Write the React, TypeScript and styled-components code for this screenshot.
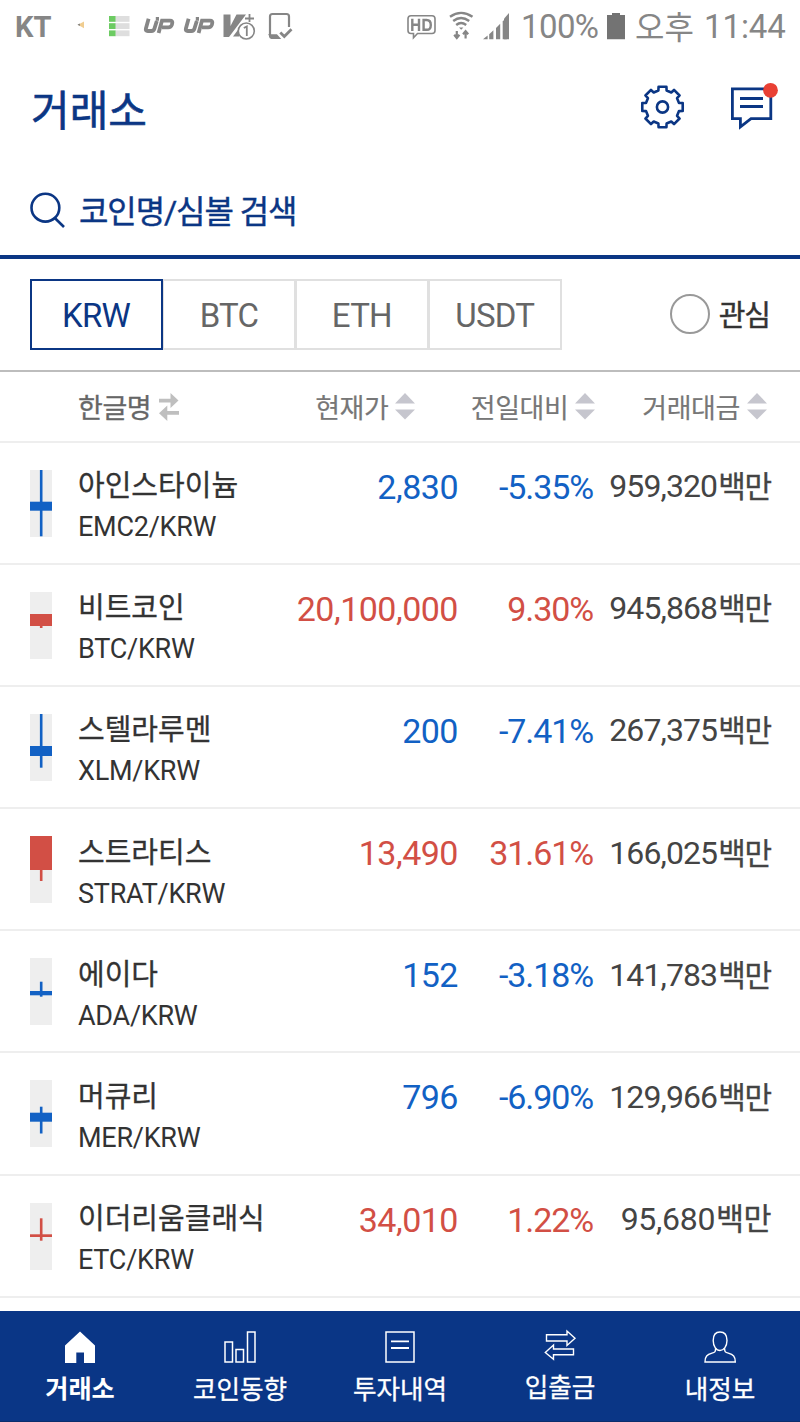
import React from 'react';
import styled, { createGlobalStyle, css } from 'styled-components';

const NAVY = '#0b3684';
const BLUE = '#1261c4';
const RED = '#d24f45';

const GlobalStyle = createGlobalStyle`
  * { box-sizing: border-box; }
  body {
    margin: 0;
    background: #fff;
    font-family: Roboto, 'Noto Sans CJK KR', sans-serif;
    color: #333;
  }
`;

const Screen = styled.div`
  width: 800px;
  height: 1422px;
  display: flex;
  flex-direction: column;
  overflow: hidden;
  background: #fff;
`;

/* ---------- status bar ---------- */

const StatusBar = styled.div`
  height: 54px;
  flex: none;
  display: flex;
  justify-content: space-between;
  color: #868686;
`;

const StatusGroup = styled.div<{ $side: 'left' | 'right' }>`
  display: flex;
  align-items: flex-start;
  height: 54px;
  ${(p) => (p.$side === 'left' ? 'padding-left: 15px;' : 'padding-right: 15px;')}
`;

const StatusText = styled.span<{ $width: number; $size: number; $weight?: number; $spacing?: number; $top: number }>`
  width: ${(p) => p.$width}px;
  margin-top: ${(p) => p.$top}px;
  font-size: ${(p) => p.$size}px;
  font-weight: ${(p) => p.$weight ?? 400};
  letter-spacing: ${(p) => p.$spacing ?? 0}px;
  line-height: 40px;
  white-space: nowrap;
`;

const StatusIcon = styled.svg`
  display: block;
  flex: none;
  overflow: visible;
`;

/* ---------- header and search ---------- */

const Header = styled.header`
  height: 106px;
  flex: none;
  display: flex;
  justify-content: space-between;
  padding: 27px 20px 0 31px;
`;

const Title = styled.h1`
  margin: 4px 0 0;
  font-size: 42px;
  font-weight: 400;
  line-height: 54px;
  letter-spacing: 0;
  -webkit-text-stroke: 0.6px;
  color: ${NAVY};
`;

const HeaderActions = styled.div`
  display: flex;
  gap: 44px;
`;

const Icon = styled.svg`
  display: block;
  flex: none;
  overflow: visible;
`;

const SearchBar = styled.div`
  height: 99px;
  flex: none;
  display: flex;
  padding: 30px 0 0 29px;
  border-bottom: 4px solid ${NAVY};
  color: ${NAVY};
`;

const SearchLabel = styled.span`
  margin: 2px 0 0 12px;
  font-size: 32px;
  line-height: 40px;
  letter-spacing: -1.1px;
  -webkit-text-stroke: 0.4px;
`;

/* ---------- market tabs ---------- */

const MarketBar = styled.div`
  height: 113px;
  flex: none;
  display: flex;
  justify-content: space-between;
  padding: 20px 30px 0 29.6px;
  border-bottom: 2px solid #bdbdbd;
`;

const Tabs = styled.div`
  display: flex;
`;

const Tab = styled.div<{ $active?: boolean }>`
  width: 133.9px;
  height: 70.5px;
  border: 2px solid #e0e0e0;
  display: flex;
  align-items: center;
  justify-content: center;
  padding: 3px 1px 0 0;
  font-size: 33px;
  letter-spacing: -0.8px;
  color: #666;
  & + & { margin-left: -1px; }
  ${(p) =>
    p.$active &&
    css`
      position: relative;
      z-index: 1;
      border-color: ${NAVY};
      color: ${NAVY};
    `}
`;

const Favorite = styled.div`
  display: flex;
  gap: 9px;
  padding-top: 15px;
  font-size: 29px;
  line-height: 40px;
  letter-spacing: -1px;
`;

const FavoriteLabel = styled.span`
  margin-top: 2px;
  -webkit-text-stroke: 0.4px;
`;

const Radio = styled.span`
  width: 40px;
  height: 40px;
  border: 2px solid #999;
  border-radius: 50%;
`;

/* ---------- table ---------- */

const columns = css`
  display: grid;
  grid-template-columns: 48.4px 180px 200px 135px 178px;
  padding: 0 29px 0 29.6px;
`;

const TableHead = styled.div`
  ${columns}
  height: 70.5px;
  flex: none;
  border-bottom: 2px solid #eee;
  color: #777;
  grid-template-columns: 48.4px 200px 137.5px 180px 171.5px;
`;

const HeadCell = styled.div<{ $align?: 'left' | 'right'; $dark?: boolean }>`
  display: flex;
  justify-content: ${(p) => (p.$align === 'left' ? 'flex-start' : 'flex-end')};
  padding-top: 17px;
  gap: ${(p) => (p.$dark ? 8 : 7)}px;
  font-size: 27px;
  line-height: 40px;
  letter-spacing: -0.4px;
  -webkit-text-stroke: ${(p) => (p.$dark ? 0.3 : 0.15)}px;
  white-space: nowrap;
  color: ${(p) => (p.$dark ? '#666' : '#777')};
  & > svg { margin-top: 4px; }
`;

const Row = styled.div`
  ${columns}
  height: 122.2px;
  flex: none;
  border-bottom: 2px solid #eee;
`;

const Candle = styled.svg`
  display: block;
  margin-top: 27px;
`;

const NameCell = styled.div`
  padding-top: 23.5px;
  white-space: nowrap;
`;

const CoinName = styled.div`
  font-size: 29px;
  line-height: 40px;
  -webkit-text-stroke: 0.3px;
`;

const CoinPair = styled.div`
  margin-top: 3px;
  font-size: 27px;
  line-height: 36px;
  letter-spacing: -0.25px;
`;

const NumberCell = styled.div<{ $color: string; $spacing: number }>`
  padding-top: 24px;
  text-align: right;
  font-size: 34px;
  line-height: 40px;
  letter-spacing: ${(p) => p.$spacing}px;
  color: ${(p) => p.$color};
  white-space: nowrap;
`;

const AmountCell = styled.div<{ $tight: boolean }>`
  padding-top: 23.5px;
  text-align: right;
  font-size: 32px;
  line-height: 40px;
  letter-spacing: ${(p) => (p.$tight ? -0.9 : -0.3)}px;
  color: #444;
  white-space: nowrap;
`;

const Unit = styled.span<{ $tight: boolean }>`
  margin-left: 1px;
  font-size: ${(p) => (p.$tight ? 30 : 30.5)}px;
  letter-spacing: ${(p) => (p.$tight ? -1.2 : -0.6)}px;
  -webkit-text-stroke: 0.3px;
`;

const List = styled.div`
  flex: 1;
  min-height: 0;
  overflow: hidden;
`;

/* ---------- bottom navigation ---------- */

const BottomNav = styled.nav`
  height: 111px;
  flex: none;
  display: grid;
  grid-template-columns: repeat(5, 1fr);
  background: #0a3686;
  border-bottom: 1px solid #0b2e6d;
  color: #fff;
`;

const NavItem = styled.div<{ $active?: boolean; $raised?: boolean }>`
  display: flex;
  flex-direction: column;
  align-items: center;
  padding-top: ${(p) => (p.$raised ? 16 : 18)}px;
  font-size: ${(p) => (p.$active ? 25.2 : 25.6)}px;
  font-weight: ${(p) => (p.$active ? 700 : 400)};
  line-height: 36px;
  gap: 9px;
  -webkit-text-stroke: ${(p) => (p.$active ? 0 : 0.3)}px;
`;

const candles = {
  width: 22.4,
  height: 67,
};

interface Coin {
  name: string;
  pair: string;
  price: string;
  change: string;
  amount: string;
  up: boolean;
  wick: [number, number];
  body: [number, number];
}

const coins: Coin[] = [
  { name: '아인스타이늄', pair: 'EMC2/KRW', price: '2,830', change: '-5.35%', amount: '959,320', up: false, wick: [0, 66.3], body: [31.7, 40.7] },
  { name: '비트코인', pair: 'BTC/KRW', price: '20,100,000', change: '9.30%', amount: '945,868', up: true, wick: [22, 36], body: [22, 34] },
  { name: '스텔라루멘', pair: 'XLM/KRW', price: '200', change: '-7.41%', amount: '267,375', up: false, wick: [0, 53.7], body: [32, 42] },
  { name: '스트라티스', pair: 'STRAT/KRW', price: '13,490', change: '31.61%', amount: '166,025', up: true, wick: [0, 45], body: [0, 34] },
  { name: '에이다', pair: 'ADA/KRW', price: '152', change: '-3.18%', amount: '141,783', up: false, wick: [23.7, 38.7], body: [33, 37.3] },
  { name: '머큐리', pair: 'MER/KRW', price: '796', change: '-6.90%', amount: '129,966', up: false, wick: [26.7, 53.5], body: [32.7, 41.7] },
  { name: '이더리움클래식', pair: 'ETC/KRW', price: '34,010', change: '1.22%', amount: '95,680', up: true, wick: [15.3, 37.7], body: [31.3, 34] },
];

function gearPath(cx: number, cy: number): string {
  const pt = (r: number, deg: number) => {
    const a = ((deg - 90) * Math.PI) / 180;
    return `${(cx + r * Math.cos(a)).toFixed(2)} ${(cy + r * Math.sin(a)).toFixed(2)}`;
  };
  const parts: string[] = [];
  for (let k = 0; k < 8; k++) {
    const c = k * 45;
    parts.push(pt(17, c - 14), pt(20.6, c - 11), pt(20.6, c + 11), pt(17, c + 14));
  }
  return `M${parts.join('L')}Z`;
}

const SortIcon = () => (
  <Icon width="20" height="27" viewBox="0 0 20 27" fill="#c6c6ce">
    <path d="M10 0L20 10.5H0Z" />
    <path d="M10 26.5L0 16.5H20Z" />
  </Icon>
);

const SwapIcon = () => (
  <Icon width="20" height="28" viewBox="0 0 20 28" fill="#bfbfbf">
    <path d="M0 5.7H11.5V0L19.5 7.5L11.5 15V9.6H0Z" />
    <path d="M20 18H8.3V12.5L0 20.3L8.3 28V21.7H20Z" />
  </Icon>
);

const App: React.FC = () => (
  <>
    <GlobalStyle />
    <Screen>
      <StatusBar>
        <StatusGroup $side="left">
          <StatusText $width={62} $size={29} $weight={700} $top={6.5}>KT</StatusText>
          <StatusIcon width="32" height="54" viewBox="77 0 32 54">
            <path d="M78 24.8L84 21.5V28.2Z" fill="#f0cd90" />
            <path d="M77.5 24.8L79.8 23.5V26.1Z" fill="#777" />
          </StatusIcon>
          <StatusIcon width="34" height="54" viewBox="109 0 34 54">
            <g fill="#dedede">
              <rect x="115" y="16" width="14.5" height="5.8" />
              <rect x="115" y="23.2" width="14.5" height="5.8" />
              <rect x="115" y="30.4" width="14.5" height="5.8" />
            </g>
            <g fill="#6ccb62">
              <rect x="109" y="16" width="6.5" height="5.8" />
              <rect x="109" y="23.2" width="6.5" height="5.8" />
              <rect x="109" y="30.4" width="6.5" height="5.8" />
            </g>
          </StatusIcon>
          {[0, 1].map((i) => (
            <StatusIcon key={i} width="40" height="54" viewBox="0 0 40 54" fill="none" stroke="#868686" strokeWidth="3.8">
              <path d="M5.6 18.8L2.9 28.4Q2.2 31 4.8 31H8.4Q10.8 31 11.4 28.8L13.8 21M12.8 18.9H16" />
              <path d="M15.6 33L19 20.6H27Q30 20.6 29.2 23.4L28.8 25Q28 27.4 25.2 27.4H19" />
            </StatusIcon>
          ))}
          <StatusIcon width="46" height="54" viewBox="223 0 46 54">
            <path d="M223.5 14.5H230.5V26L236.5 14.5H246L229 37H223.5Z" fill="#868686" />
            <path d="M233 36.5L239 28.5V36.5Z" fill="#868686" />
            <path d="M245 18.5H254M249.5 14V22" stroke="#868686" strokeWidth="1.8" />
            <circle cx="246.3" cy="31" r="8" fill="#fff" stroke="#868686" strokeWidth="1.6" />
            <path d="M243.8 28L246.8 26.4V36" fill="none" stroke="#868686" strokeWidth="1.8" />
          </StatusIcon>
          <StatusIcon width="24" height="54" viewBox="269 0 24 54" fill="none" stroke="#868686">
            <path d="M289 27V16.5Q289 14 286.5 14H272.5Q270 14 270 16.5V35.5Q270 38 272.5 38H279" strokeWidth="2.2" />
            <path d="M270 35.2H276.5L279 38H272Z" strokeWidth="2" fill="#868686" />
            <path d="M280.3 32.5L284.3 36.5L291.5 29.3" strokeWidth="2.8" />
          </StatusIcon>
        </StatusGroup>
        <StatusGroup $side="right">
          <StatusIcon width="43" height="54" viewBox="407 0 43 54" fill="none" stroke="#868686">
            <path d="M411 15.7H432Q435 15.7 435 18.7V30.5Q435 33.5 432 33.5H417.5L413.5 37.8V33.5H411Q408 33.5 408 30.5V18.7Q408 15.7 411 15.7Z" strokeWidth="1.6" />
            <path d="M412.3 18.8V31M419 18.8V31M412.3 24.8H419" strokeWidth="2.4" />
            <path d="M423.6 20H426.6Q430.8 20 430.8 25T426.6 29.8H423.6Z" strokeWidth="2.4" />
          </StatusIcon>
          <StatusIcon width="33" height="54" viewBox="450 0 33 54" fill="none" stroke="#868686" strokeWidth="2.4">
            <path d="M450 16.8Q461 9 472.5 16.8" />
            <path d="M453.2 21Q461 15 469.2 21" />
            <path d="M456.2 25Q461 21 466.2 25" />
            <path d="M459 27.5H463.4L461.2 29.8Z" fill="#868686" stroke="none" />
            <path d="M456.8 31V37M454.2 34.8L456.8 38L459.4 34.8M465.6 38.5V32.5M463 34.3L465.6 31.3L468.2 34.3" strokeWidth="2.2" />
          </StatusIcon>
          <StatusIcon width="38" height="54" viewBox="483 0 38 54" fill="#868686">
            <path d="M483 39.3L487.6 35.5V39.3Z" />
            <path d="M489.2 34.3L493.4 30.3V39.3H489.2Z" />
            <path d="M496 28L500.2 23.8V39.3H496Z" />
            <path d="M502.7 21.5L506.8 17V39.3H502.7Z" />
            <path d="M504 18.8L509 13V39.3H504Z" />
          </StatusIcon>
          <StatusText $width={86} $size={33} $spacing={-0.6} $top={7}>100%</StatusText>
          <StatusIcon width="28" height="54" viewBox="607 0 28 54" fill="#737373">
            <path d="M607 15H612V13H620V15H625V39.3H607Z" />
          </StatusIcon>
          <StatusText $width={69} $size={32} $top={7.5}>오후</StatusText>
          <StatusText $width={81} $size={33} $spacing={-0.1} $top={7}>11:44</StatusText>
        </StatusGroup>
      </StatusBar>

      <Header>
        <Title>거래소</Title>
        <HeaderActions>
          <Icon width="46" height="50" viewBox="640 81 46 50" fill="none" stroke={NAVY} strokeWidth="2.6">
            <path d={gearPath(662.5, 107)} strokeLinejoin="round" />
            <circle cx="662.5" cy="107" r="5.6" />
          </Icon>
          <Icon width="50" height="50" viewBox="730 81 50 50" fill="none" stroke={NAVY} strokeWidth="2.8">
            <path d="M732.4 88.8H770.8V118.6H751L740.4 126.8V118.6H732.4Z" />
            <path d="M740 98.5H763M740 106.5H763" />
            <circle cx="770.5" cy="90.3" r="7.4" fill="#e94034" stroke="none" />
          </Icon>
        </HeaderActions>
      </Header>

      <SearchBar>
        <Icon width="38" height="40" viewBox="29 190 38 40" fill="none" stroke={NAVY} strokeWidth="2.6">
          <circle cx="45.4" cy="207.7" r="13.9" />
          <path d="M54.8 218L64 227" />
        </Icon>
        <SearchLabel>코인명/심볼 검색</SearchLabel>
      </SearchBar>

      <MarketBar>
        <Tabs>
          <Tab $active>KRW</Tab>
          <Tab>BTC</Tab>
          <Tab>ETH</Tab>
          <Tab>USDT</Tab>
        </Tabs>
        <Favorite>
          <Radio />
          <FavoriteLabel>관심</FavoriteLabel>
        </Favorite>
      </MarketBar>

      <TableHead>
        <span />
        <HeadCell $align="left" $dark>한글명<SwapIcon /></HeadCell>
        <HeadCell>현재가<SortIcon /></HeadCell>
        <HeadCell>전일대비<SortIcon /></HeadCell>
        <HeadCell>거래대금<SortIcon /></HeadCell>
      </TableHead>

      <List>
        {coins.map((c) => {
          const color = c.up ? RED : BLUE;
          const tight = c.amount.length > 6;
          return (
            <Row key={c.pair}>
              <Candle width={candles.width} height={candles.height}>
                <rect width={candles.width} height={candles.height} fill="#eee" />
                <rect x="9.9" y={c.wick[0]} width="2.6" height={c.wick[1] - c.wick[0]} fill={color} />
                <rect x="0" y={c.body[0]} width={candles.width} height={c.body[1] - c.body[0]} fill={color} />
              </Candle>
              <NameCell>
                <CoinName>{c.name}</CoinName>
                <CoinPair>{c.pair}</CoinPair>
              </NameCell>
              <NumberCell $color={color} $spacing={-0.5}>{c.price}</NumberCell>
              <NumberCell $color={color} $spacing={-1.1}>{c.change}</NumberCell>
              <AmountCell $tight={tight}>
                {c.amount}
                <Unit $tight={tight}>백만</Unit>
              </AmountCell>
            </Row>
          );
        })}
      </List>

      <BottomNav>
        <NavItem $active>
          <Icon width="32" height="34" viewBox="64 1329 32 34" fill="#fff">
            <path d="M80 1331.5L95 1345.5V1363H84V1352.5H76.3V1363H65V1345.5Z" />
          </Icon>
          거래소
        </NavItem>
        <NavItem>
          <Icon width="34" height="34" viewBox="223 1329 34 34" fill="none" stroke="#fff" strokeWidth="1.5">
            <path d="M225 1342H232.5V1362H225ZM236 1349.5H243.5V1362H236ZM247.5 1332H255V1362H247.5Z" />
          </Icon>
          코인동향
        </NavItem>
        <NavItem>
          <Icon width="34" height="34" viewBox="383 1329 34 34" fill="none" stroke="#fff" strokeWidth="1.5">
            <path d="M386 1332H414V1362H386Z" />
            <path d="M391 1341.4H409M391 1348H409" strokeWidth="1.8" />
          </Icon>
          투자내역
        </NavItem>
        <NavItem $raised>
          <Icon width="34" height="34" viewBox="543 1327 34 34" fill="none" stroke="#fff" strokeWidth="1.4">
            <path d="M546.5 1334.7H567V1331L575 1338.3L567 1345.5V1341H546.5Z" />
            <path d="M573.5 1349H553.5V1345L545.3 1352.5L553.5 1359.3V1354.8H573.5Z" />
          </Icon>
          입출금
        </NavItem>
        <NavItem>
          <Icon width="34" height="34" viewBox="703 1329 34 34" fill="none" stroke="#fff" strokeWidth="1.4">
            <path d="M720 1332C715.8 1332 713.2 1335 713.2 1340.5C713.2 1346 716.2 1350.5 720 1350.5S727 1346 727 1340.5C727 1335 724.4 1332 720 1332Z" />
            <path d="M715.6 1348.3C715.6 1352 714.8 1352.4 712 1353.2C707 1354.6 705 1356.2 705 1362H735.3C735.3 1356.2 733.3 1354.6 728.3 1353.2C725.4 1352.4 724.6 1352 724.6 1348.3" />
          </Icon>
          내정보
        </NavItem>
      </BottomNav>
    </Screen>
  </>
);

export default App;
